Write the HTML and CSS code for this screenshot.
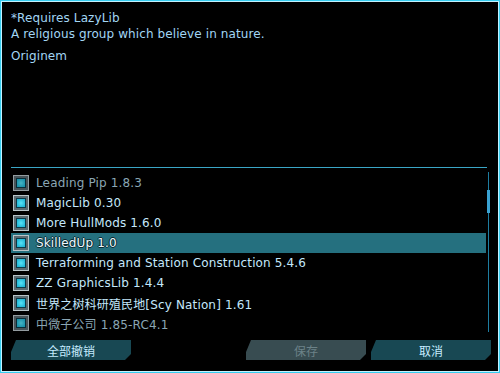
FILE: index.html
```html
<!DOCTYPE html>
<html>
<head>
    <link rel="stylesheet" href="styles.css">
</head>
<body>
    <div class="frame">
        <div class="desc">
            <p>*Requires LazyLib<br>A religious group which believe in nature.</p>
            <p>Originem</p>
        </div>

        <div class="separator"></div>

        <div class="list-wrap">
            <ul class="mods">
                <li class="faded"><span class="check"></span>Leading Pip 1.8.3</li>
                <li><span class="check"></span>MagicLib 0.30</li>
                <li><span class="check"></span>More HullMods 1.6.0</li>
                <li class="selected"><span class="check"></span>SkilledUp 1.0</li>
                <li><span class="check"></span>Terraforming and Station Construction 5.4.6</li>
                <li><span class="check"></span>ZZ GraphicsLib 1.4.4</li>
                <li><span class="check"></span>世界之树科研殖民地[Scy Nation] 1.61</li>
                <li class="faded"><span class="check"></span>中微子公司 1.85-RC4.1</li>
            </ul>
            <div class="scrollbar">
                <div class="thumb"></div>
            </div>
        </div>

        <div class="buttons">
            <button class="btn">全部撤销</button>
            <span class="spacer"></span>
            <button class="btn disabled">保存</button>
            <button class="btn">取消</button>
        </div>
    </div>
</body>
</html>
```

FILE: styles.css
```css
body {
    margin: 0;
    background: #000;
    font-family: "DejaVu Sans", "Noto Sans CJK SC", sans-serif;
}

.frame {
    width: 500px;
    height: 373px;
    box-sizing: border-box;
    border: 1px solid #36cdf0;
    box-shadow: inset 0 0 0 1px #c4f2ff;
    background: #000;
    padding: 9px 10px 0 10px;
    display: flex;
    flex-direction: column;
}

.desc {
    height: 157px;
    color: #a2d6f4;
    font-size: 12px;
    line-height: 16px;
    letter-spacing: 0.1px;
}

.desc p {
    margin: 0 0 6px 0;
}

.separator {
    height: 1px;
    width: 476px;
    background: #3aa6c6;
}

.list-wrap {
    display: flex;
    margin-top: 4px;
    height: 160px;
}

.mods {
    list-style: none;
    margin: 0;
    padding: 1px 0 0 0;
    width: 476px;
}

.mods li {
    height: 20px;
    display: flex;
    align-items: center;
    color: #c4e8fc;
    font-size: 12px;
    letter-spacing: 0.15px;
    text-shadow: 0 0 1px #000;
    white-space: nowrap;
}

.mods li.faded {
    color: #8aa6b4;
}

.mods li.selected {
    background: #25707f;
    color: #eef8ff;
    text-shadow: 1px 0 0 #0a2a30, -1px 0 0 #0a2a30, 0 1px 0 #0a2a30, 0 -1px 0 #0a2a30;
}

.check {
    width: 16px;
    height: 16px;
    box-sizing: border-box;
    margin: 0 7px 0 2px;
    border: 1px solid #b8c4c8;
    background: #5c6a70;
    padding: 2px;
    display: flex;
}

.check::after {
    content: "";
    flex: 1;
    border: 1px solid #0c3a48;
    background: radial-gradient(circle, #58e2f6 0%, #1fb6d6 80%);
}

.faded .check {
    opacity: 0.8;
}

.scrollbar {
    position: relative;
    width: 1px;
    margin-left: 2px;
    background: #1e7da0;
}

.thumb {
    position: absolute;
    left: -1px;
    top: 18px;
    width: 3px;
    height: 23px;
    background: #3aa2d2;
}

.buttons {
    display: flex;
    gap: 5px;
    margin-top: 8px;
    width: 480px;
}

.spacer {
    flex: 1;
}

.btn {
    width: 120px;
    height: 20px;
    border: none;
    padding: 0;
    background: #184853;
    color: #c6ecff;
    font-family: "Noto Sans CJK SC", sans-serif;
    font-size: 12px;
    clip-path: polygon(5px 0, 100% 0, 100% calc(100% - 6px), calc(100% - 6px) 100%, 0 100%, 0 12px);
}

.btn.disabled {
    background: #384c51;
    color: #6c8288;
}
```
